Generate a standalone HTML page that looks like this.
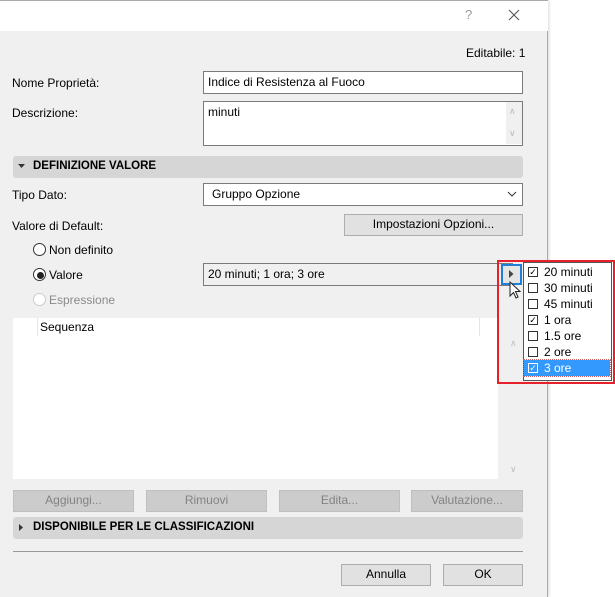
<!DOCTYPE html>
<html><head><meta charset="utf-8"><style>
*{box-sizing:border-box;margin:0;padding:0}
body{width:615px;height:597px;background:#fff;font-family:"Liberation Sans",sans-serif;font-size:12px;color:#000;position:relative;overflow:hidden}
.a{position:absolute}
.dlg{left:0;top:0;width:548px;height:597px;background:#f0f0f0;border-right:1px solid #aaa;box-shadow:1px 0 3px rgba(0,0,0,.15)}
.title{left:0;top:0;width:548px;height:31px;background:#fff;border-top:1px solid #aaa}
.inp{background:#fff;border:1px solid #7a7a7a;padding:3px 4px;white-space:nowrap}
.btn{background:#e1e1e1;border:1px solid #adadad;text-align:center;line-height:19px}
.dis{background:#cccccc;border:1px solid #bfbfbf;color:#838383}
.bar{background:#d6d6d6;border-radius:3px;font-weight:bold;font-size:11.5px;line-height:21px;padding-left:20px}
.rad{width:13px;height:13px;border:1px solid #333;border-radius:50%;background:#fff}
.it{left:0;height:16px;width:86px;line-height:16px;padding-left:20px;white-space:nowrap}
.cb{position:absolute;left:4px;top:3px;width:10px;height:10px;border:1px solid #333;background:#fff;font-size:9px;line-height:8px;text-align:center}
</style></head><body>
<div class="a dlg"></div>
<div class="a title"></div>
<div class="a" style="left:465px;top:7px;color:#999;font-size:13px">?</div>
<svg class="a" style="left:508px;top:9px" width="12" height="12"><path d="M1 1L11 11M11 1L1 11" stroke="#555" stroke-width="1.1"/></svg>
<div class="a" style="left:466px;top:46px">Editabile: 1</div>
<div class="a" style="left:12px;top:76px">Nome Proprietà:</div>
<div class="a inp" style="left:203px;top:71px;width:320px;height:23px">Indice di Resistenza al Fuoco</div>
<div class="a" style="left:12px;top:106px">Descrizione:</div>
<div class="a inp" style="left:203px;top:101px;width:320px;height:45px;padding-top:3px">minuti</div>
<div class="a" style="left:506px;top:102px;width:16px;height:42px;background:#f0f0f0"></div>
<div class="a" style="left:509px;top:106px;color:#bbb;font-size:9px">&#8743;</div>
<div class="a" style="left:509px;top:128px;color:#bbb;font-size:9px">&#8744;</div>
<div class="a bar" style="left:13px;top:156px;width:510px;height:22px">DEFINIZIONE VALORE</div>
<svg class="a" style="left:18px;top:164px" width="8" height="6"><path d="M0 0H7L3.5 4Z" fill="#333"/></svg>
<div class="a" style="left:12px;top:188px">Tipo Dato:</div>
<div class="a inp" style="left:203px;top:183px;width:320px;height:23px;padding-left:8px">Gruppo Opzione</div>
<svg class="a" style="left:507px;top:191px" width="10" height="6"><path d="M1 1L5 5L9 1" stroke="#333" fill="none"/></svg>
<div class="a" style="left:12px;top:219px">Valore di Default:</div>
<div class="a btn" style="left:344px;top:214px;width:179px;height:22px">Impostazioni Opzioni...</div>
<div class="a rad" style="left:33px;top:243px"></div>
<div class="a" style="left:49px;top:243px">Non definito</div>
<div class="a rad" style="left:33px;top:268px"></div>
<div class="a" style="left:37px;top:272px;width:7px;height:7px;border-radius:50%;background:#222"></div>
<div class="a" style="left:49px;top:268px">Valore</div>
<div class="a inp" style="left:203px;top:263px;width:310px;height:23px;background:#f0f0f0">20 minuti; 1 ora; 3 ore</div>
<div class="a rad" style="left:33px;top:293px;border-color:#ccc"></div>
<div class="a" style="left:49px;top:293px;color:#8a8a8a">Espressione</div>
<div class="a" style="left:13px;top:318px;width:485px;height:161px;background:#fff"></div>
<div class="a" style="left:37px;top:318px;width:1px;height:18px;background:#e5e5e5"></div>
<div class="a" style="left:479px;top:318px;width:1px;height:18px;background:#e5e5e5"></div>
<div class="a" style="left:40px;top:320px">Sequenza</div>
<div class="a" style="left:510px;top:338px;color:#bbb;font-size:9px">&#8743;</div>
<div class="a" style="left:510px;top:464px;color:#bbb;font-size:9px">&#8744;</div>
<div class="a btn dis" style="left:13px;top:490px;width:121px;height:22px">Aggiungi...</div>
<div class="a btn dis" style="left:146px;top:490px;width:121px;height:22px">Rimuovi</div>
<div class="a btn dis" style="left:279px;top:490px;width:121px;height:22px">Edita...</div>
<div class="a btn dis" style="left:411px;top:490px;width:112px;height:22px">Valutazione...</div>
<div class="a bar" style="left:13px;top:517px;width:510px;height:22px">DISPONIBILE PER LE CLASSIFICAZIONI</div>
<svg class="a" style="left:19px;top:524px" width="6" height="8"><path d="M0 0V7L4 3.5Z" fill="#333"/></svg>
<div class="a" style="left:13px;top:551px;width:510px;height:1px;background:#999"></div>
<div class="a btn" style="left:341px;top:564px;width:90px;height:22px">Annulla</div>
<div class="a btn" style="left:443px;top:564px;width:80px;height:22px">OK</div>
<!-- popup -->
<div class="a" style="left:497px;top:260px;width:118px;height:124px;border:2px solid #e8202a"></div>
<div class="a" style="left:501px;top:264px;width:21px;height:21px;border:2px solid #1f7fd6;background:#e5e5e5"></div>
<svg class="a" style="left:509px;top:270px" width="5" height="8"><path d="M0 0V8L4.5 4Z" fill="#444"/></svg>
<svg class="a" style="left:509px;top:281px" width="12" height="18"><path d="M1 1V15L4.5 11.5L7 17L9 16L6.5 10.5H11Z" fill="#fff" stroke="#222" stroke-width="1"/></svg>
<div class="a" style="left:523px;top:262px;width:89px;height:119px;background:#fff;border:1px solid #555">
<div class="a it" style="top:1px"><span class="cb">✓</span>20 minuti</div>
<div class="a it" style="top:17px"><span class="cb"></span>30 minuti</div>
<div class="a it" style="top:33px"><span class="cb"></span>45 minuti</div>
<div class="a it" style="top:49px"><span class="cb">✓</span>1 ora</div>
<div class="a it" style="top:65px"><span class="cb"></span>1.5 ore</div>
<div class="a it" style="top:81px"><span class="cb"></span>2 ore</div>
<div class="a it" style="top:97px;background:#3399ff;color:#fff;outline:1px dotted #c66"><span class="cb" style="background:#3399ff;border-color:#fff;color:#fff">✓</span>3 ore</div>
</div>
</body></html>
